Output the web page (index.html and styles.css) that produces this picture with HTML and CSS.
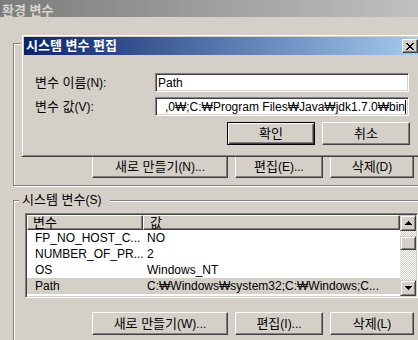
FILE: index.html
```html
<!DOCTYPE html>
<html lang="ko">
<head>
<meta charset="utf-8">
<title>환경 변수</title>
<link rel="stylesheet" href="styles.css">
</head>
<body>
<div class="app">
  <div class="titlebar">환경 변수</div>

  <div class="group group-user">
    <div class="btnrow">
      <div class="btn w1"><span class="k">새로 만들기</span>(N)...</div>
      <div class="btn w2"><span class="k">편집</span>(E)...</div>
      <div class="btn w3"><span class="k">삭제</span>(D)</div>
    </div>
  </div>

  <div class="group group-system">
    <div class="legend"><span class="k">시스템 변수</span>(S)</div>
    <div class="list">
      <div class="list-main">
        <div class="lv-header">
          <div class="hcell c1"><span class="k">변수</span></div>
          <div class="hcell c2"><span class="k">값</span></div>
        </div>
        <div class="lv-row"><div class="cell c1">FP_NO_HOST_C...</div><div class="cell c2">NO</div></div>
        <div class="lv-row"><div class="cell c1">NUMBER_OF_PR...</div><div class="cell c2">2</div></div>
        <div class="lv-row"><div class="cell c1">OS</div><div class="cell c2">Windows_NT</div></div>
        <div class="lv-row sel"><div class="cell c1">Path</div><div class="cell c2">C:₩Windows₩system32;C:₩Windows;C...</div></div>
        <div class="lv-row"><div class="cell c1">PATHEXT</div><div class="cell c2">.COM;.EXE;.BAT;.CMD;.VBS;.VBE;.JS...</div></div>
      </div>
      <div class="vscroll">
        <div class="sbtn"><svg width="7" height="4" viewBox="0 0 7 4"><path d="M3 0h1v1H3z M2 1h3v1H2z M1 2h5v1H1z M0 3h7v1H0z" fill="#000"/></svg></div>
        <div class="track"><div class="thumb"></div></div>
        <div class="sbtn"><svg width="7" height="4" viewBox="0 0 7 4"><path d="M0 0h7v1H0z M1 1h5v1H1z M2 2h3v1H2z M3 3h1v1H3z" fill="#000"/></svg></div>
      </div>
    </div>
    <div class="btnrow bottom">
      <div class="btn w1"><span class="k">새로 만들기</span>(W)...</div>
      <div class="btn w2"><span class="k">편집</span>(I)...</div>
      <div class="btn w3"><span class="k">삭제</span>(L)</div>
    </div>
  </div>

  <div class="dialog">
    <div class="dlg-title">
      <span class="dlg-caption">시스템 변수 편집</span>
      <div class="close"><svg width="8" height="7" viewBox="0 0 8 7"><path d="M0 0h2v1H0z M6 0h2v1H6z M1 1h2v1H1z M5 1h2v1H5z M2 2h4v1H2z M3 3h2v1H3z M2 4h4v1H2z M1 5h2v1H1z M5 5h2v1H5z M0 6h2v1H0z M6 6h2v1H6z" fill="#000"/></svg></div>
    </div>
    <div class="dlg-body">
      <div class="form">
        <div class="label"><span class="k">변수 이름</span>(N):</div>
        <div class="field"><span>Path</span></div>
        <div class="label"><span class="k">변수 값</span>(V):</div>
        <div class="field end"><span>,0₩;C:₩Program Files₩Java₩jdk1.7.0₩bin</span><span class="caret"></span></div>
      </div>
      <div class="dlg-buttons">
        <div class="btn default"><span class="k">확인</span></div>
        <div class="btn dlgbtn"><span class="k">취소</span></div>
      </div>
    </div>
  </div>
</div>
</body>
</html>
```

FILE: styles.css
```css
* { box-sizing: border-box; }
html, body { margin: 0; padding: 0; }
body {
  width: 418px;
  height: 340px;
  overflow: hidden;
  background: #d4d0c8;
  font: 12px/14px "Liberation Sans", "Noto Sans CJK KR", sans-serif;
  color: #000;
}
.k { font-size: 13px; }
.app {
  position: relative;
  width: 418px;
  height: 340px;
  overflow: hidden;
  background: #d4d0c8;
}
.titlebar {
  height: 17px;
  background: linear-gradient(to right, #7c7c7c, #c0c0c0);
  color: #d8d4cc;
  font-weight: bold;
  font-size: 13px;
  padding: 4px 0 0 2px;
  line-height: 13px;
  white-space: nowrap;
}

/* group boxes */
.group {
  position: relative;
  margin-left: 13px;
  width: 420px;
  border: 1px solid #808080;
  box-shadow: inset 1px 1px #fff, 1px 1px #fff;
}
.group-user {
  margin-top: 26px;
  height: 143px;
  display: flex;
  flex-direction: column;
  justify-content: flex-end;
  padding: 0 0 7px 78px;
}
.group-system {
  margin-top: 14px;
  height: 160px;
  padding: 12px 0 0 11px;
}
.legend {
  position: absolute;
  top: -8px;
  left: 5px;
  padding: 0 9px 0 3px;
  background: #d4d0c8;
  line-height: 14px;
  white-space: nowrap;
}

/* buttons */
.btnrow { display: flex; gap: 7px; }
.btnrow.bottom { margin: 14px 0 0 67px; }
.btn {
  height: 23px;
  border: 1px solid;
  border-color: #fff #404040 #404040 #fff;
  box-shadow: inset -1px -1px #808080;
  background: #d4d0c8;
  display: flex;
  align-items: center;
  justify-content: center;
  white-space: nowrap;
}
.w1 { width: 136px; }
.w2 { width: 88px; }
.w3 { width: 84px; }

/* list view */
.list {
  width: 393px;
  height: 85px;
  border: 1px solid;
  border-color: #808080 #fff #fff #808080;
  box-shadow: inset 1px 1px #404040, inset -1px -1px #d4d0c8;
  padding: 1px;
  display: flex;
  background: #fff;
}
.list-main {
  flex: 1;
  overflow: hidden;
  background: #fff;
}
.lv-header {
  display: flex;
  height: 15px;
}
.hcell {
  background: #d4d0c8;
  border: 1px solid;
  border-color: #fff #404040 #404040 #fff;
  box-shadow: inset -1px -1px #808080;
  line-height: 13px;
  white-space: nowrap;
}
.hcell.c1 { width: 116px; padding-left: 5px; }
.hcell.c2 { flex: 1; padding-left: 6px; }
.lv-row {
  display: flex;
  height: 16px;
  line-height: 16px;
  white-space: nowrap;
}
.lv-row.sel { background: #d4d0c8; }
.cell.c1 { width: 116px; padding-left: 8px; overflow: hidden; }
.cell.c2 { flex: 1; padding-left: 4px; overflow: hidden; }

.vscroll {
  width: 16px;
  display: flex;
  flex-direction: column;
}
.sbtn {
  height: 16px;
  background: #d4d0c8;
  border: 1px solid;
  border-color: #d4d0c8 #404040 #404040 #d4d0c8;
  box-shadow: inset 1px 1px #fff, inset -1px -1px #808080;
  display: flex;
  align-items: center;
  justify-content: center;
}
.track {
  flex: 1;
  background: repeating-conic-gradient(#fff 0 25%, #d4d0c8 0 50%) 0 0 / 2px 2px;
  padding-top: 5px;
}
.thumb {
  height: 14px;
  background: #d4d0c8;
  border: 1px solid;
  border-color: #d4d0c8 #404040 #404040 #d4d0c8;
  box-shadow: inset 1px 1px #fff, inset -1px -1px #808080;
}

/* dialog */
.dialog {
  position: absolute;
  left: 21px;
  top: 34px;
  width: 402px;
  height: 123px;
  background: #d4d0c8;
  border: 1px solid;
  border-color: #d4d0c8 #404040 #404040 #d4d0c8;
  box-shadow: inset 1px 1px #fff, inset -1px -1px #808080;
  padding: 2px;
}
.dlg-title {
  height: 18px;
  background: linear-gradient(to right, #0a246a, #a6caf0);
  display: flex;
  align-items: center;
  justify-content: space-between;
  padding: 0 2px;
}
.dlg-caption {
  color: #fff;
  font-weight: bold;
  font-size: 13px;
  white-space: nowrap;
}
.close {
  width: 16px;
  height: 14px;
  background: #d4d0c8;
  border: 1px solid;
  border-color: #fff #404040 #404040 #fff;
  box-shadow: inset -1px -1px #808080;
  display: flex;
  align-items: center;
  justify-content: center;
}
.dlg-body { padding: 18px 0 0 11px; }
.form {
  display: grid;
  grid-template-columns: 120px 254px;
  grid-auto-rows: 19px;
  row-gap: 5px;
  align-items: center;
}
.label { white-space: nowrap; }
.field {
  height: 19px;
  background: #fff;
  border: 1px solid;
  border-color: #808080 #fff #fff #808080;
  box-shadow: inset 1px 1px #404040, inset -1px -1px #d4d0c8;
  padding: 0 2px 0 2px;
  display: flex;
  align-items: center;
  overflow: hidden;
  white-space: nowrap;
}
.field.end { justify-content: flex-end; }
.caret {
  width: 1px;
  height: 14px;
  background: #000;
  flex: none;
}
.dlg-buttons {
  width: 375px;
  margin-top: 6px;
  display: flex;
  justify-content: flex-end;
  gap: 7px;
}
.dlg-buttons .btn { width: 88px; }
.btn.default {
  border-color: #000;
  box-shadow: inset 1px 1px #fff, inset -1px -1px #404040, inset -2px -2px #808080;
}
```
